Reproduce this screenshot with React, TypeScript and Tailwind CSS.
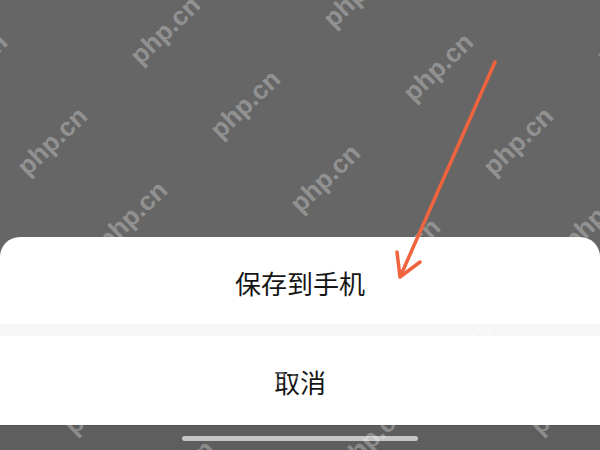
import React from 'react';

// Watermark lattice: base point plus two step vectors
const BASE = { x: 165, y: 30 };
const STEP_A = { x: 80, y: 74 };
const STEP_B = { x: 273, y: 37 };

const watermarks: { x: number; y: number }[] = [];
for (let j = -3; j <= 2; j++) {
  for (let i = -2; i <= 9; i++) {
    const x = BASE.x + i * STEP_A.x + j * STEP_B.x;
    const y = BASE.y + i * STEP_A.y + j * STEP_B.y;
    if (x > -70 && x < 670 && y > -50 && y < 500) watermarks.push({ x, y });
  }
}

const Arrow: React.FC = () => (
  <svg className="absolute inset-0 pointer-events-none" width="600" height="450" viewBox="0 0 600 450">
    <g stroke="#f0633f" strokeWidth="3.5" strokeLinecap="round" strokeLinejoin="round" fill="none">
      <line x1="495" y1="62" x2="400.5" y2="276" />
      <polyline points="397,252 400,277 420,262" />
    </g>
  </svg>
);

export default function App() {
  return (
    <div className="relative w-[600px] h-[450px] overflow-hidden bg-[#666666] flex flex-col" style={{ fontFamily: '"Noto Sans CJK SC", "Noto Sans", sans-serif' }}>
      {/* dimmed content area */}
      <div className="flex-1" />

      {/* action sheet */}
      <div className="bg-white rounded-t-[20px] flex flex-col">
        <button className="h-[87px] flex items-center justify-center pt-[4px] text-[26px] text-[#161616]">
          保存到手机
        </button>
        <div className="h-[12px] bg-[#f6f6f6]" />
        <button className="h-[89px] flex items-center justify-center pt-[2px] text-[26px] text-[#161616]">
          取消
        </button>
      </div>

      {/* home indicator strip */}
      <div className="h-[25px] bg-[#5e5e5e] border-t border-[#555] flex items-center justify-center">
        <div className="w-[236px] h-[5px] rounded-full bg-[#c6c6c6]" />
      </div>

      {/* watermark overlay */}
      <div className="absolute inset-0 pointer-events-none">
        {watermarks.map((w, idx) => (
          <div
            key={idx}
            className="absolute -translate-x-1/2 -translate-y-1/2 rotate-[-44deg] text-[26px] font-bold text-white/30 whitespace-nowrap leading-none"
            style={{ left: w.x, top: w.y, fontFamily: '"Liberation Sans", Arial, sans-serif' }}
          >
            php.cn
          </div>
        ))}
      </div>

      <Arrow />
    </div>
  );
}
